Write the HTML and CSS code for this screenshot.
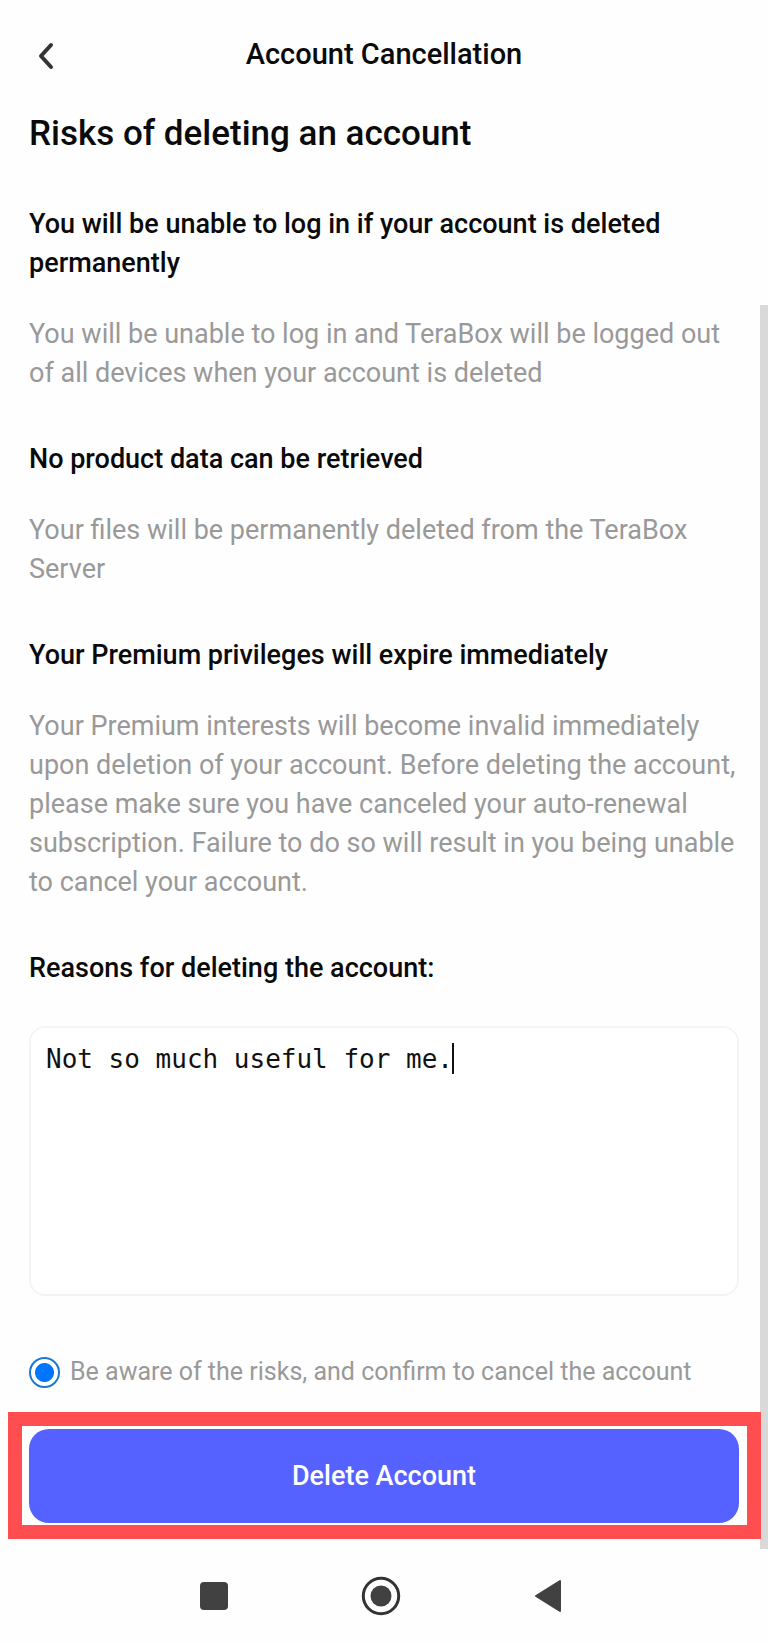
FILE: index.html
```html
<!DOCTYPE html>
<html lang="en">
<head>
  <meta charset="UTF-8">
  <meta name="viewport" content="width=device-width, initial-scale=1">
  <title>Account Cancellation</title>
  <link rel="stylesheet" href="styles.css">
</head>
<body>

  <header class="topbar">
    <button class="back" type="button" aria-label="Back">
      <svg width="18" height="30" viewBox="0 0 18 30" fill="none" stroke="#333" stroke-width="4" stroke-linecap="round" stroke-linejoin="round">
        <path d="M15 4 L5 15 L15 26"/>
      </svg>
    </button>
    <h1 class="topbar-title">Account Cancellation</h1>
  </header>

  <main class="content">
    <h2 class="heading">Risks of deleting an account</h2>

    <h3 class="subheading">You will be unable to log in if your account is deleted permanently</h3>
    <p class="text">You will be unable to log in and TeraBox will be logged out of all devices when your account is deleted</p>

    <h3 class="subheading">No product data can be retrieved</h3>
    <p class="text">Your files will be permanently deleted from the TeraBox Server</p>

    <h3 class="subheading">Your Premium privileges will expire immediately</h3>
    <p class="text">Your Premium interests will become invalid immediately upon deletion of your account. Before deleting the account, please make sure you have canceled your auto-renewal subscription. Failure to do so will result in you being unable to cancel your account.</p>

    <label class="subheading" for="reason">Reasons for deleting the account:</label>
    <div class="reason-box">
      <textarea class="reason" id="reason">Not so much useful for me.</textarea>
      <span class="caret"></span>
    </div>

    <div class="confirm">
      <input class="confirm-radio" type="radio" id="confirm" checked>
      <label class="confirm-label" for="confirm">Be aware of the risks, and confirm to cancel the account</label>
    </div>
  </main>

  <div class="highlight">
    <button class="delete" type="button">Delete Account</button>
  </div>

  <nav class="navbar">
    <button class="nav-btn" type="button" aria-label="Recent apps">
      <svg width="40" height="40" viewBox="0 0 40 40"><rect x="6" y="6" width="28" height="28" rx="4" fill="#414141"/></svg>
    </button>
    <button class="nav-btn" type="button" aria-label="Home">
      <svg width="40" height="40" viewBox="0 0 40 40"><circle cx="20" cy="20" r="17.7" fill="none" stroke="#333" stroke-width="3"/><circle cx="20" cy="20" r="10.5" fill="#414141"/></svg>
    </button>
    <button class="nav-btn" type="button" aria-label="Back">
      <svg width="40" height="40" viewBox="0 0 40 40"><path d="M8 20 L32 5 V35 Z" fill="#414141" stroke="#414141" stroke-width="2" stroke-linejoin="round"/></svg>
    </button>
  </nav>

  <div class="scrollbar"></div>

</body>
</html>
```

FILE: styles.css
```css
* {
  box-sizing: border-box;
}

body {
  position: relative;
  margin: 0;
  background: #fefefe;
  color: #0a0a0a;
  font-family: Roboto, "Liberation Sans", sans-serif;
}

button {
  border: none;
  padding: 0;
  background: none;
  font-family: inherit;
  cursor: pointer;
}

.topbar {
  display: grid;
  grid-template-columns: 40px 1fr 40px;
  align-items: center;
  padding: 35px 28px 0;
}

.back {
  display: flex;
  padding: 4px 8px 0;
}

.topbar-title {
  margin: 0;
  font-size: 29px;
  font-weight: 500;
  line-height: 38px;
  text-align: center;
}

.content {
  padding: 37px 29px 0;
}

.heading {
  margin: 0;
  font-size: 35px;
  font-weight: 500;
  line-height: 48px;
}

.subheading {
  display: block;
  margin: 47px 0 0;
  font-size: 27px;
  font-weight: 500;
  line-height: 39px;
}

.text {
  margin: 32px 0 0;
  color: #999;
  font-size: 27px;
  font-weight: 400;
  line-height: 39px;
}

.reason-box {
  position: relative;
  margin-top: 38px;
}

.reason {
  display: block;
  width: 100%;
  height: 270px;
  padding: 15px;
  border: 2px solid #f4f4f4;
  border-radius: 16px;
  outline: none;
  background: #fff;
  color: #111;
  font-family: "DejaVu Sans Mono", monospace;
  font-size: 26px;
  line-height: 32px;
  resize: none;
}

/* text cursor after the last typed letter */
.caret {
  position: absolute;
  top: 17px;
  left: 423px;
  width: 2px;
  height: 31px;
  background: #111;
}

.confirm {
  display: flex;
  align-items: center;
  gap: 10px;
  margin-top: 58px;
}

.confirm-radio {
  appearance: none;
  width: 31px;
  height: 31px;
  margin: 0;
  border: 2px solid #1a78d6;
  border-radius: 50%;
}

.confirm-radio:checked {
  background: radial-gradient(circle, #0075ff 9px, #fff 10px);
}

.confirm-label {
  color: #999;
  font-size: 25px;
  font-weight: 400;
  line-height: 36px;
}

.highlight {
  margin: 22px 7px 0 8px;
  padding: 3px 8px 2px 7px;
  border: 14px solid #ff4d50;
  background: #fff;
}

.delete {
  display: block;
  width: 100%;
  height: 94px;
  border-radius: 20px;
  background: #5662ff;
  color: #fff;
  font-size: 27px;
  font-weight: 500;
}

.navbar {
  display: flex;
  justify-content: center;
  gap: 127px;
  padding: 37px 6px 26px 0;
}

.nav-btn {
  display: flex;
}

.scrollbar {
  position: absolute;
  top: 305px;
  right: 0;
  bottom: 93px;
  width: 8px;
  background: #d9d9d9;
  z-index: -1;
}
```
